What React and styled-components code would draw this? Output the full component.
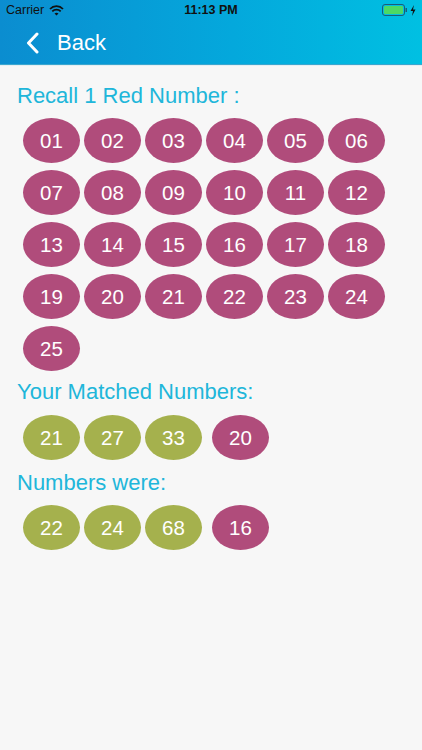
import React from "react";
import styled, { createGlobalStyle } from "styled-components";

const GlobalStyle = createGlobalStyle`
  html, body {
    margin: 0;
    padding: 0;
    background: #f7f7f7;
  }
  body {
    font-family: "Liberation Sans", Arial, sans-serif;
  }
`;

const Screen = styled.div`
  width: 422px;
  height: 750px;
  background: #f7f7f7;
  overflow: hidden;
`;

const Header = styled.header`
  height: 64px;
  background: linear-gradient(90deg, #0b8dd0 0%, #04a8dc 55%, #00c0e2 100%);
  border-bottom: 1px solid #3aa6cf;
  box-shadow: 0 1px 0 #e4eef2;
  color: #fff;
`;

const StatusBar = styled.div`
  height: 20px;
  display: grid;
  grid-template-columns: 1fr auto 1fr;
  align-items: center;
  padding: 0 6px;
  font-size: 12.5px;
  color: #111;
`;

const Carrier = styled.div`
  display: flex;
  align-items: center;
  gap: 5px;
`;

const Clock = styled.div`
  font-weight: bold;
  font-size: 12.5px;
`;

const Battery = styled.div`
  justify-self: end;
  display: flex;
  align-items: center;
  gap: 2px;
`;

const NavBar = styled.div`
  height: 44px;
  display: flex;
  align-items: center;
  padding: 1px 0 0 26px;
  gap: 18px;
  font-size: 22px;
`;

const Content = styled.main`
  padding: 19px 17px 0 17px;
`;

const Heading = styled.h2`
  margin: 0;
  font-weight: normal;
  font-size: 22px;
  color: #20b6da;
  line-height: 24px;
`;

const BallGrid = styled.div`
  display: flex;
  flex-wrap: wrap;
  gap: 7px 4px;
  padding: ${(p) => p.$pad || "10px 0 9px 6px"};
  width: 370px;
`;

const Ball = styled.div`
  width: 57px;
  height: 45px;
  border-radius: 50%;
  background: ${(p) => (p.$green ? "#a5b14d" : "#b04c7b")};
  color: #fff;
  display: flex;
  align-items: center;
  justify-content: center;
  font-size: 20.5px;
  margin-left: ${(p) => (p.$extra ? "6px" : "0")};
`;

const red = Array.from({ length: 25 }, (_, i) => String(i + 1).padStart(2, "0"));

const Row = ({ greens, last, pad }) => (
  <BallGrid $pad={pad}>
    {greens.map((n) => (
      <Ball key={n} $green>
        {n}
      </Ball>
    ))}
    <Ball $extra>{last}</Ball>
  </BallGrid>
);

export default function App() {
  return (
    <Screen>
      <GlobalStyle />
      <Header>
        <StatusBar>
          <Carrier>
            Carrier
            <svg width="15" height="11" viewBox="0 0 15 11">
              <path d="M1 4 A9 9 0 0 1 14 4" stroke="#111" strokeWidth="1.8" fill="none" />
              <path d="M3.3 6.3 A6 6 0 0 1 11.7 6.3" stroke="#111" strokeWidth="1.8" fill="none" />
              <path d="M5.5 8.6 A3 3 0 0 1 9.5 8.6 L7.5 10.6 Z" fill="#111" />
            </svg>
          </Carrier>
          <Clock>11:13 PM</Clock>
          <Battery>
            <svg width="26" height="12" viewBox="0 0 26 12">
              <rect x="0.5" y="0.5" width="22" height="11" rx="2.5" fill="none" stroke="#1a5d7a" />
              <rect x="2" y="2" width="19" height="8" rx="1.2" fill="#4cd964" />
              <rect x="23.5" y="4" width="1.5" height="4" fill="#1a5d7a" />
            </svg>
            <svg width="6" height="11" viewBox="0 0 6 11">
              <path d="M4 0 L0.5 6 H3 L2 11 L5.5 4.5 H3 Z" fill="#111" />
            </svg>
          </Battery>
        </StatusBar>
        <NavBar>
          <svg width="13" height="22" viewBox="0 0 13 22">
            <path d="M11 2 L2.5 11 L11 20" stroke="#fff" strokeWidth="3" fill="none" strokeLinecap="round" strokeLinejoin="round" />
          </svg>
          Back
        </NavBar>
      </Header>
      <Content>
        <Heading>Recall 1 Red Number :</Heading>
        <BallGrid>
          {red.map((n) => (
            <Ball key={n}>{n}</Ball>
          ))}
        </BallGrid>
        <Heading>Your Matched Numbers:</Heading>
        <Row greens={["21", "27", "33"]} last="20" pad="11px 0 11px 6px" />
        <Heading>Numbers were:</Heading>
        <Row greens={["22", "24", "68"]} last="16" pad="10px 0 10px 6px" />
      </Content>
    </Screen>
  );
}
